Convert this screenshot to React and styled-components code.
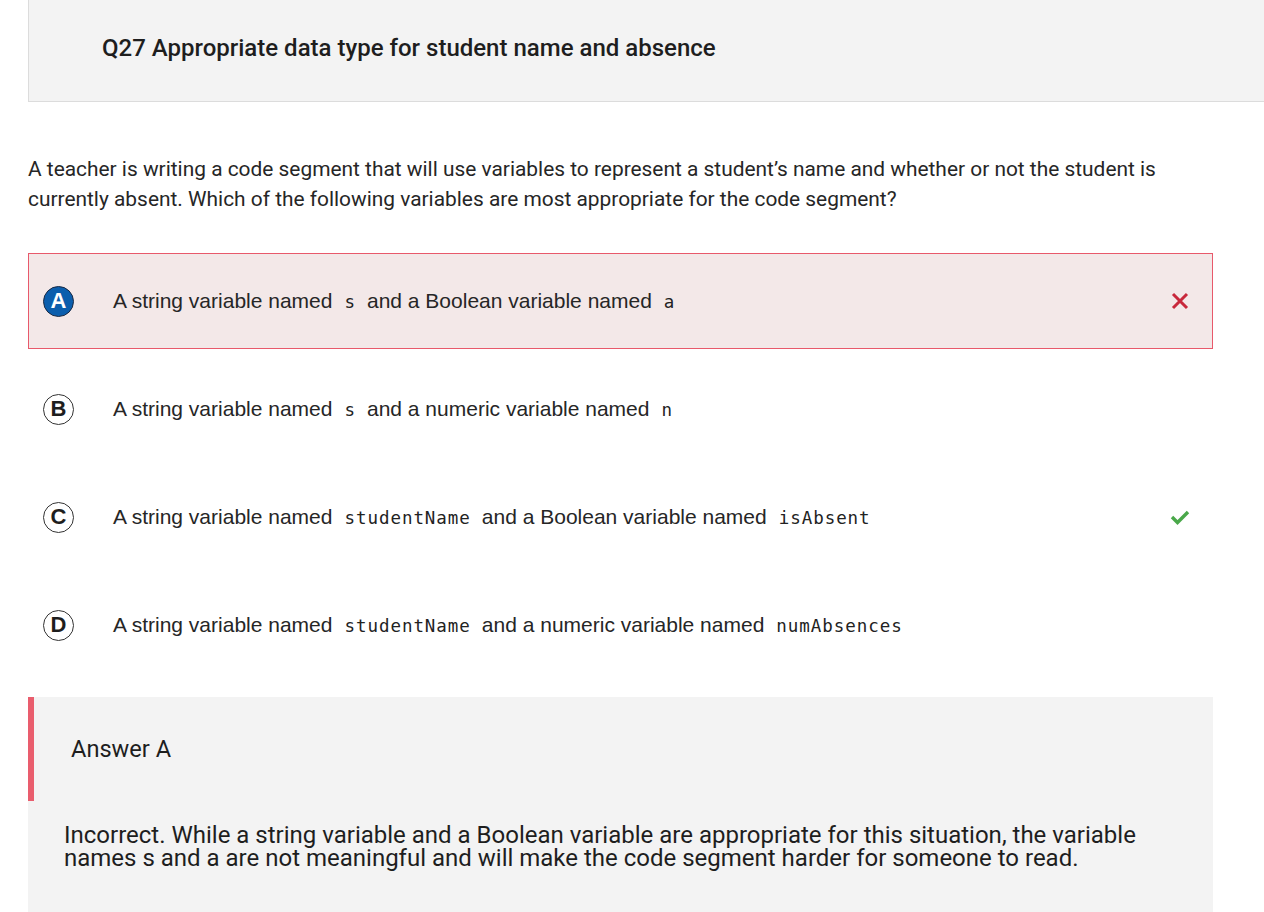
import React from 'react'
import styled, { createGlobalStyle } from 'styled-components'

const GlobalStyle = createGlobalStyle`
  body {
    margin: 0;
    background: #ffffff;
    font-family: Roboto, "Liberation Sans", sans-serif;
    color: #1e1e1e;
    overflow: hidden;
  }
`

const Page = styled.div`
  box-sizing: border-box;
  width: 1264px;
  height: 912px;
  overflow: hidden;
  padding: 0 51px 0 28px;
`

const QuestionHeader = styled.header`
  box-sizing: border-box;
  height: 102px;
  margin-right: -60px;
  padding-left: 73px;
  display: flex;
  align-items: center;
  background: #f3f3f3;
  border-left: 1px solid #dcdcdc;
  border-bottom: 1px solid #dcdcdc;
`

const Title = styled.h1`
  margin: 0 0 6px;
  font-family: Roboto, sans-serif;
  font-size: 24px;
  font-weight: 500;
  color: #1e1e1e;
`

const Prompt = styled.p`
  margin: 52px 0 39px;
  font-family: Roboto, sans-serif;
  font-size: 20.9px;
  line-height: 30px;
  color: #262626;
`

const OptionList = styled.div`
  display: flex;
  flex-direction: column;
  gap: 12px;
`

const Option = styled.div`
  box-sizing: border-box;
  height: 96px;
  display: flex;
  align-items: center;
  padding: 0 22px 0 14px;
  border: 1px solid ${(p) => (p.$selected ? '#e8596b' : 'transparent')};
  background: ${(p) => (p.$selected ? '#f3e8e8' : 'transparent')};
`

const Letter = styled.span`
  box-sizing: border-box;
  flex: none;
  width: 31px;
  height: 31px;
  border-radius: 50%;
  display: flex;
  align-items: center;
  justify-content: center;
  font-family: "Liberation Sans", Arial, sans-serif;
  font-weight: 700;
  font-size: 22px;
  border: 1px solid ${(p) => (p.$selected ? '#1c2b44' : '#333')};
  background: ${(p) => (p.$selected ? '#0b5ead' : '#ffffff')};
  color: ${(p) => (p.$selected ? '#ffffff' : '#1e1e1e')};
`

const OptionText = styled.span`
  flex: 1;
  margin-left: 39px;
  font-family: "Liberation Sans", Arial, sans-serif;
  font-size: 21px;
  color: #262626;
`

const Code = styled.code`
  font-family: "DejaVu Sans Mono", monospace;
  font-size: 17.5px;
  letter-spacing: 0.95px;
  margin: 0 11px 0 12px;
  color: #222;
`

const Mark = styled.span`
  flex: none;
  width: 20px;
  height: 20px;
  display: flex;
  align-items: center;
  justify-content: center;
`

const AnswerPanel = styled.section`
  margin-top: 24px;
  background: #f3f3f3;
  padding-bottom: 60px;
`

const AnswerHead = styled.div`
  box-sizing: border-box;
  height: 104px;
  display: flex;
  align-items: center;
  padding-left: 37px;
  border-left: 6px solid #e95d6d;
  font-family: Roboto, sans-serif;
  font-size: 23.6px;
  color: #1e1e1e;
`

const Explanation = styled.p`
  margin: 23px 0 0;
  padding: 0 60px 0 36px;
  font-family: Roboto, sans-serif;
  font-size: 24px;
  line-height: 23px;
  color: #1e1e1e;
`

const CrossIcon = () => (
  <svg width="18" height="18" viewBox="0 0 18 18">
    <path d="M2 2 L16 16 M16 2 L2 16" stroke="#c8283c" strokeWidth="3" />
  </svg>
)

const CheckIcon = () => (
  <svg width="20" height="16" viewBox="0 0 20 16">
    <path d="M2 8 L7.5 13.5 L18 3" stroke="#4aa84a" strokeWidth="3.4" fill="none" />
  </svg>
)

const options = [
  { key: 'A', parts: ['A string variable named', 's', 'and a Boolean variable named', 'a'], selected: true, mark: 'wrong' },
  { key: 'B', parts: ['A string variable named', 's', 'and a numeric variable named', 'n'] },
  { key: 'C', parts: ['A string variable named', 'studentName', 'and a Boolean variable named', 'isAbsent'], mark: 'right' },
  { key: 'D', parts: ['A string variable named', 'studentName', 'and a numeric variable named', 'numAbsences'] },
]

const App = () => {
  return (
    <Page>
      <GlobalStyle />
      <QuestionHeader>
        <Title>Q27 Appropriate data type for student name and absence</Title>
      </QuestionHeader>
      <Prompt>
        A teacher is writing a code segment that will use variables to represent a student’s name and whether or not the student is
        currently absent. Which of the following variables are most appropriate for the code segment?
      </Prompt>
      <OptionList>
        {options.map((o) => (
          <Option key={o.key} $selected={o.selected}>
            <Letter $selected={o.selected}>{o.key}</Letter>
            <OptionText>
              {o.parts[0]}
              <Code>{o.parts[1]}</Code>
              {o.parts[2]}
              <Code>{o.parts[3]}</Code>
            </OptionText>
            <Mark>
              {o.mark === 'wrong' && <CrossIcon />}
              {o.mark === 'right' && <CheckIcon />}
            </Mark>
          </Option>
        ))}
      </OptionList>
      <AnswerPanel>
        <AnswerHead>Answer A</AnswerHead>
        <Explanation>
          Incorrect. While a string variable and a Boolean variable are appropriate for this situation, the variable names s and a are
          not meaningful and will make the code segment harder for someone to read.
        </Explanation>
      </AnswerPanel>
    </Page>
  )
}

export default App
